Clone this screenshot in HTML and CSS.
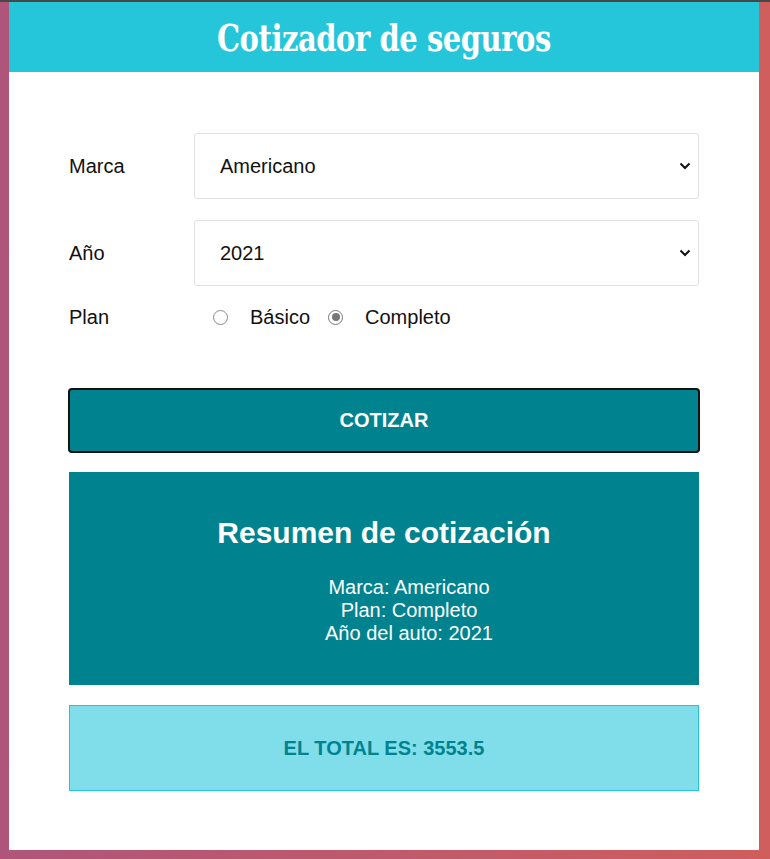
FILE: index.html
```html
<!DOCTYPE html>
<html lang="es">
<head>
<meta charset="utf-8">
<title>Cotizador de seguros</title>
<link rel="stylesheet" href="styles.css">
</head>
<body>
<div class="topline"></div>
<div class="page">
  <header class="header">
    <h1 class="title">Cotizador de seguros</h1>
  </header>
  <main class="content">
    <form class="form">
      <div class="field">
        <label class="label">Marca</label>
        <div class="select">
          <span>Americano</span>
          <svg class="chev" width="12" height="8" viewBox="0 0 12 8"><path d="M1.5 1.5 L6 6 L10.5 1.5" fill="none" stroke="#111" stroke-width="2"/></svg>
        </div>
      </div>
      <div class="field">
        <label class="label">Año</label>
        <div class="select">
          <span>2021</span>
          <svg class="chev" width="12" height="8" viewBox="0 0 12 8"><path d="M1.5 1.5 L6 6 L10.5 1.5" fill="none" stroke="#111" stroke-width="2"/></svg>
        </div>
      </div>
      <div class="field plan">
        <label class="label">Plan</label>
        <div class="radios">
          <span class="radio"></span><span class="rlabel">Básico</span>
          <span class="radio checked"></span><span class="rlabel">Completo</span>
        </div>
      </div>
      <button type="button" class="btn">COTIZAR</button>
    </form>
    <section class="summary">
      <h2 class="summary-title">Resumen de cotización</h2>
      <ul class="summary-list">
        <li>Marca: Americano</li>
        <li>Plan: Completo</li>
        <li>Año del auto: 2021</li>
      </ul>
    </section>
    <section class="total">
      <p class="total-text">EL TOTAL ES: 3553.5</p>
    </section>
  </main>
</div>
</body>
</html>
```
FILE: styles.css
```css
html, body { margin: 0; padding: 0; }
body {
  height: 859px;
  background: linear-gradient(to right, #AF557B, #CF5E5C);
  font-family: "Liberation Sans", Arial, sans-serif;
  overflow: hidden;
}
.topline { height: 2px; background: #474747; }
.page {
  width: 750px;
  margin-left: 9px;
  background: #fff;
  height: 848px;
}
.header {
  background: #26C6DA;
  height: 70px;
  display: flex;
  align-items: center;
  justify-content: center;
}
.title {
  margin: 0;
  color: #fff;
  font-family: "DejaVu Serif Condensed", "DejaVu Serif", serif;
  font-weight: bold;
  font-size: 37px;
  letter-spacing: -0.5px;
  line-height: 1;
  padding-top: 2px;
  transform: scaleX(0.87);
  white-space: nowrap;
}
.content { padding: 61px 60px 0; }
.form { display: flex; flex-direction: column; }
.field {
  display: flex;
  align-items: center;
  margin-bottom: 21px;
  font-size: 20px;
  color: #111;
}
.label { width: 125px; flex: none; }
.select {
  flex: 1;
  height: 64px;
  border: 1px solid #e1e1e1;
  border-radius: 3px;
  display: flex;
  align-items: center;
  justify-content: space-between;
  padding: 0 7px 0 25px;
}
.chev { display: block; }
.plan { margin-top: -5px; margin-bottom: 0; height: 30px; }
.radios { display: flex; align-items: center; padding-left: 19px; }
.radio {
  width: 15px; height: 15px;
  border: 1px solid #8a8a8a;
  border-radius: 50%;
  box-sizing: border-box;
  margin-right: 22px;
  position: relative;
}
.radio.checked { border-color: #7a7a7a; }
.radio.checked::after {
  content: "";
  position: absolute;
  left: 2.5px; top: 2.5px;
  width: 8px; height: 8px;
  border-radius: 50%;
  background: #777;
}
.rlabel { margin-right: 18px; }
.btn {
  margin-top: 56px;
  height: 65px;
  background: #00838F;
  border: 2px solid #111;
  border-radius: 4px;
  color: #fff;
  font-family: "Liberation Sans", Arial, sans-serif;
  font-weight: bold;
  font-size: 20px;
  margin-left: -1px;
  margin-right: -1px;
}
.summary {
  margin-top: 19px;
  background: #00838F;
  color: #fff;
  text-align: center;
  height: 213px;
  box-sizing: border-box;
  padding-top: 44px;
}
.summary-title { margin: 0 0 26px; font-size: 30px; line-height: 34px; }
.summary-list {
  list-style: none;
  margin: 0;
  padding: 0 0 0 50px;
  font-size: 20px;
  line-height: 23px;
}
.total {
  margin-top: 20px;
  background: #80DEEA;
  border: 1px solid #26C6DA;
  height: 84px;
  display: flex;
  align-items: center;
  justify-content: center;
}
.total-text {
  margin: 0;
  color: #00838F;
  font-weight: bold;
  font-size: 20px;
  white-space: nowrap;
}
```
